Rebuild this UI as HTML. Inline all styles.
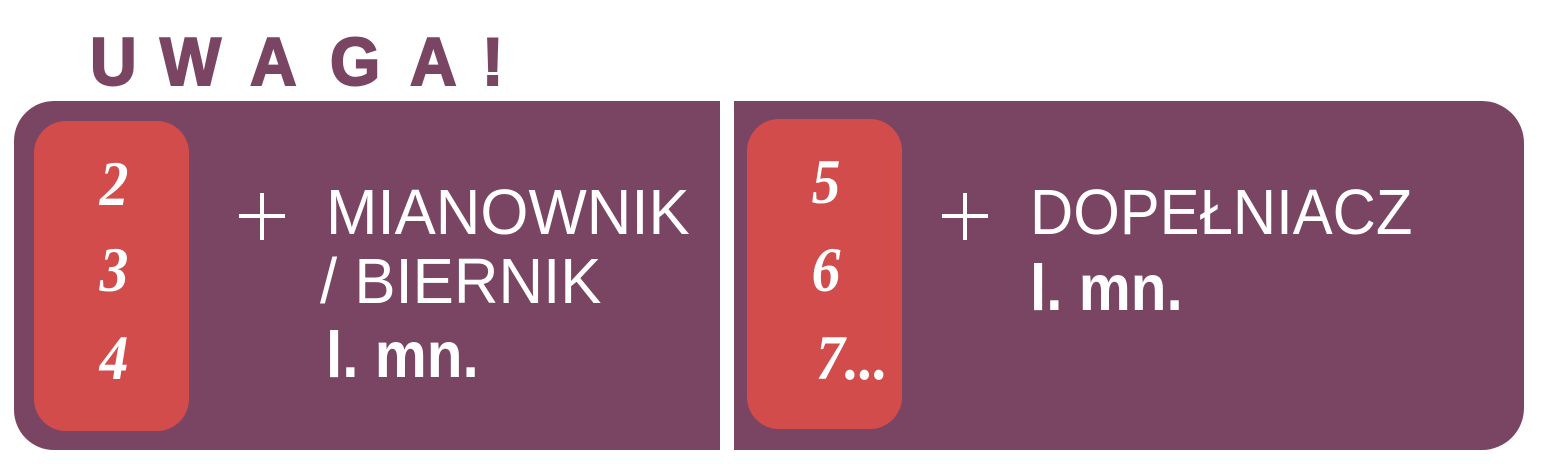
<!DOCTYPE html>
<html><head><meta charset="utf-8"><style>
body{margin:0;width:1542px;height:464px;background:#fff;position:relative;overflow:hidden;font-family:"Liberation Sans",sans-serif}
.a{position:absolute}
.p{background:#7a4562}
.r{background:#d24c4c;border-radius:32px}
.t{color:#fff;white-space:nowrap;transform-origin:0 0}
.h{color:#7a4562;font-weight:bold;font-size:68px;line-height:1;transform:scaleX(.95);transform-origin:0 0;-webkit-text-stroke:2px #7a4562}
.n{color:#fff;font-family:"Liberation Serif",serif;font-weight:bold;font-style:italic;font-size:64px;line-height:1;text-align:center;transform:scaleX(.9)}
.pl{background:#fff}
</style></head><body>
<div class="a h" style="left:90px;top:28px">U</div>
<div class="a h" style="left:160px;top:28px">W</div>
<div class="a h" style="left:250px;top:28px">A</div>
<div class="a h" style="left:330px;top:28px">G</div>
<div class="a h" style="left:410px;top:28px">A</div>
<div class="a h" style="left:482px;top:28px">!</div>

<div class="a p" style="left:14px;top:101px;width:706px;height:349px;border-radius:40px 0 0 40px"></div>
<div class="a p" style="left:734px;top:101px;width:790px;height:349px;border-radius:0 42px 42px 0"></div>
<div class="a r" style="left:34px;top:121px;width:155px;height:310px"></div>
<div class="a r" style="left:747px;top:119px;width:155px;height:310px"></div>

<div class="a n" style="left:84px;top:152px;width:60px">2</div>
<div class="a n" style="left:84px;top:238px;width:60px">3</div>
<div class="a n" style="left:84px;top:326px;width:60px">4</div>
<div class="a n" style="left:796px;top:150px;width:60px">5</div>
<div class="a n" style="left:796px;top:238px;width:60px">6</div>
<div class="a n" style="left:812px;top:326px;text-align:left">7...</div>

<div class="a pl" style="left:239px;top:214px;width:46px;height:4px"></div>
<div class="a pl" style="left:260px;top:193px;width:4px;height:47px"></div>
<div class="a t" style="left:326px;top:180px;font-size:64px;line-height:1;transform:scaleX(.965)">MIANOWNIK</div>
<div class="a t" style="left:320px;top:249px;font-size:64px;line-height:1;transform:scaleX(.965)">/ BIERNIK</div>
<div class="a t" style="left:326px;top:322px;font-size:65px;line-height:1;font-weight:bold;transform:scaleX(.9)">l. mn.</div>

<div class="a pl" style="left:942px;top:214px;width:46px;height:4px"></div>
<div class="a pl" style="left:963px;top:193px;width:4px;height:47px"></div>
<div class="a t" style="left:1030px;top:180px;font-size:64px;line-height:1;transform:scaleX(.935)">DOPEŁNIACZ</div>
<div class="a t" style="left:1030px;top:255px;font-size:65px;line-height:1;font-weight:bold;transform:scaleX(.9)">l. mn.</div>
</body></html>
